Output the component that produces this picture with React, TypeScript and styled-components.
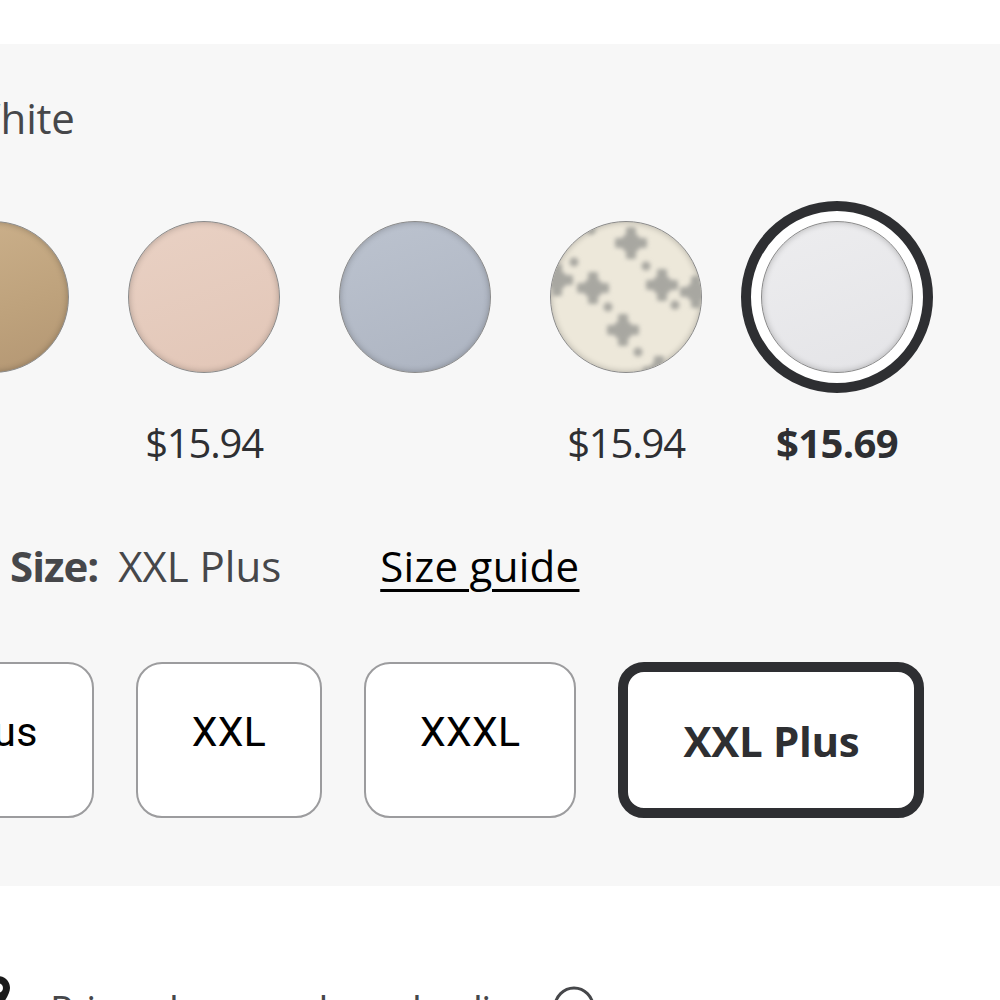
import React from "react";
import styled, { createGlobalStyle } from "styled-components";

const Global = createGlobalStyle`
  html, body { margin: 0; padding: 0; background: #ffffff; }
  body { font-family: "Open Sans", "Liberation Sans", sans-serif; overflow: hidden; }
`;

const Page = styled.div`
  width: 1000px;
  height: 1000px;
  overflow: hidden;
  display: flex;
  flex-direction: column;
  padding-top: 44px;
  box-sizing: border-box;
`;

const Panel = styled.section`
  background: #f7f7f7;
  height: 842px;
  flex-shrink: 0;
  display: flex;
  flex-direction: column;
`;

const ColorLabel = styled.div`
  margin: 50px 0 0 -38px;
  font-size: 42px;
  line-height: 48px;
  color: #46474a;
  letter-spacing: -0.2px;
  white-space: nowrap;
`;

const SwatchRow = styled.div`
  display: flex;
  gap: 19px;
  margin: 59px 0 0 -103px;
`;

const SwatchItem = styled.div`
  width: 192px;
  flex-shrink: 0;
  display: flex;
  flex-direction: column;
  align-items: center;
  gap: 26px;
`;

const SwatchRing = styled.div<{ $selected?: boolean }>`
  width: 192px;
  height: 192px;
  box-sizing: border-box;
  border-radius: 50%;
  border: 10px solid ${(p) => (p.$selected ? "#2e2f32" : "transparent")};
  background: ${(p) => (p.$selected ? "#ffffff" : "transparent")};
  padding: 10px;
`;

const SwatchFace = styled.div<{ $bg: string }>`
  position: relative;
  width: 100%;
  height: 100%;
  box-sizing: border-box;
  border-radius: 50%;
  border: 1px solid #8a8a8a;
  background: ${(p) => p.$bg};
  box-shadow: inset 0 0 6px rgba(0, 0, 0, 0.25);
  overflow: hidden;
`;

const PatternSvg = styled.svg`
  position: absolute;
  inset: 0;
  width: 100%;
  height: 100%;
`;

const Price = styled.div<{ $bold?: boolean }>`
  font-size: 40px;
  line-height: 48px;
  height: 48px;
  color: #2e2f32;
  font-weight: ${(p) => (p.$bold ? 700 : 400)};
  letter-spacing: ${(p) => (p.$bold ? "-0.6px" : "-1.2px")};
  white-space: nowrap;
`;

const SizeRow = styled.div`
  display: flex;
  align-items: baseline;
  margin: 75px 0 0 10px;
  font-size: 42px;
  line-height: 48px;
  color: #46474a;
  white-space: nowrap;
`;

const SizeKey = styled.span`
  font-weight: 700;
  letter-spacing: -1px;
  margin-right: 20px;
`;

const SizeValue = styled.span`
  letter-spacing: 0;
`;

const SizeGuide = styled.a`
  margin-left: 99px;
  color: #000000;
  text-decoration: underline;
  text-decoration-thickness: 3px;
  text-underline-offset: 7px;
  letter-spacing: 0.3px;
  cursor: pointer;
`;

const ButtonRow = styled.div`
  display: flex;
  gap: 42px;
  margin: 72px 0 0 -158px;
`;

const SizeButton = styled.button<{ $selected?: boolean }>`
  height: 156px;
  flex-shrink: 0;
  box-sizing: border-box;
  border-radius: 26px;
  background: #ffffff;
  border: ${(p) => (p.$selected ? "10px solid #2e2f32" : "2px solid #9c9c9e")};
  padding: ${(p) => (p.$selected ? "0 55px" : "0 54px 16px")};
  font-family: ${(p) =>
    p.$selected
      ? '"Open Sans", "Liberation Sans", sans-serif'
      : 'Roboto, "Liberation Sans", sans-serif'};
  font-size: ${(p) => (p.$selected ? "42px" : "41px")};
  font-weight: ${(p) => (p.$selected ? 700 : 400)};
  color: ${(p) => (p.$selected ? "#2e2f32" : "#000000")};
  letter-spacing: ${(p) => (p.$selected ? "-0.3px" : "0.3px")};
  white-space: nowrap;
  cursor: pointer;
`;

const Footer = styled.div`
  flex: 1;
  background: #ffffff;
  display: flex;
  align-items: flex-end;
  overflow: hidden;
`;

const NoteRow = styled.div`
  display: flex;
  align-items: flex-start;
  gap: 20px;
  margin: 0 0 -40px -16px;
  height: 68px;
  font-size: 39px;
  line-height: 48px;
  color: #46474a;
  white-space: nowrap;
`;

const NoteText = styled.span`
  margin: 13px 0 0 18px;
  letter-spacing: -1.6px;
`;

const TagIcon = styled.svg`
  width: 28px;
  height: 40px;
  flex-shrink: 0;
`;

const InfoIcon = styled.svg`
  width: 44px;
  height: 44px;
  margin-top: 13px;
  flex-shrink: 0;
`;

const crosses = [
  [80, 21],
  [42, 66],
  [111, 63],
  [72, 108],
  [145, 70],
  [6, 58],
  [108, 150],
];
const dots = [
  [23, 40],
  [95, 44],
  [57, 85],
  [124, 83],
  [87, 130],
  [107, 140],
  [40, 8],
];

const Pattern = () => (
  <PatternSvg viewBox="0 0 150 150">
    <defs>
      <filter id="soft" x="-20%" y="-20%" width="140%" height="140%">
        <feGaussianBlur stdDeviation="2" />
      </filter>
    </defs>
    <g fill="#a8a7a1" filter="url(#soft)">
      {crosses.map(([x, y], i) => (
        <g key={i}>
          <rect x={x - 5} y={y - 16} width={10} height={32} rx={2} />
          <rect x={x - 16} y={y - 5} width={32} height={10} rx={2} />
          <rect x={x - 8} y={y - 8} width={16} height={16} rx={2} />
        </g>
      ))}
      {dots.map(([x, y], i) => (
        <circle key={`d${i}`} cx={x} cy={y} r={4.5} />
      ))}
    </g>
  </PatternSvg>
);

type Swatch = { bg: string; price?: string; pattern?: boolean; selected?: boolean };

const swatches: Swatch[] = [
  { bg: "linear-gradient(160deg, #cdb28d 0%, #bea27c 60%, #b39673 100%)" },
  { bg: "linear-gradient(160deg, #e9d1c4 0%, #e2c6b7 100%)", price: "$15.94" },
  { bg: "linear-gradient(160deg, #bcc3cf 0%, #adb4c1 100%)" },
  { bg: "#ede8da", price: "$15.94", pattern: true },
  { bg: "linear-gradient(160deg, #ededef 0%, #e4e4e7 100%)", price: "$15.69", selected: true },
];

const sizes = ["XL Plus", "XXL", "XXXL", "XXL Plus"];

export default function App() {
  return (
    <>
      <Global />
      <Page>
        <Panel>
          <ColorLabel>White</ColorLabel>
          <SwatchRow>
            {swatches.map((s, i) => (
              <SwatchItem key={i}>
                <SwatchRing $selected={s.selected}>
                  <SwatchFace $bg={s.bg}>{s.pattern && <Pattern />}</SwatchFace>
                </SwatchRing>
                <Price $bold={s.selected}>{s.price ?? "\u00a0"}</Price>
              </SwatchItem>
            ))}
          </SwatchRow>
          <SizeRow>
            <SizeKey>Size:</SizeKey>
            <SizeValue>XXL Plus</SizeValue>
            <SizeGuide>Size guide</SizeGuide>
          </SizeRow>
          <ButtonRow>
            {sizes.map((s, i) => (
              <SizeButton key={s} $selected={i === sizes.length - 1}>
                {s}
              </SizeButton>
            ))}
          </ButtonRow>
        </Panel>
        <Footer>
          <NoteRow>
            <TagIcon viewBox="0 0 28 40">
              <path d="M14 4 C6 4 2 10 2 16 C2 24 14 38 14 38 C14 38 26 24 26 16 C26 10 22 4 14 4 Z M14 11 a5 5 0 1 1 0 10 a5 5 0 1 1 0 -10 Z" fill="#1a1a1a" fillRule="evenodd" />
            </TagIcon>
            <NoteText>Price when purchased online</NoteText>
            <InfoIcon viewBox="0 0 44 44">
              <circle cx="22" cy="22" r="19" fill="none" stroke="#46474a" strokeWidth="3" />
            </InfoIcon>
          </NoteRow>
        </Footer>
      </Page>
    </>
  );
}
